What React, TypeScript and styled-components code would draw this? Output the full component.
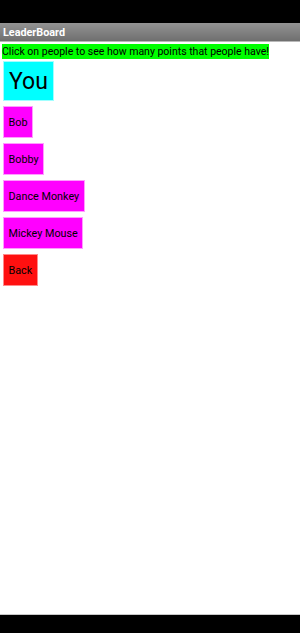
import React from "react";
import styled, { createGlobalStyle } from "styled-components";

const Global = createGlobalStyle`
  html, body { margin: 0; padding: 0; background: #ffffff; }
  body { font-family: Roboto, "Noto Sans", sans-serif; }
`;

const Screen = styled.div`
  width: 300px;
  height: 633px;
  display: flex;
  flex-direction: column;
  background: #ffffff;
`;

const StatusBar = styled.div`
  height: 23px;
  background: #000000;
`;

const TitleBar = styled.div`
  height: 18px;
  background: linear-gradient(#939393, #6f6f6f);
  border-bottom: 1px solid #b8b8b8;
  display: flex;
  align-items: center;
  padding-left: 3px;
  color: #ffffff;
  font-weight: bold;
  font-size: 10.8px;
`;

const Content = styled.div`
  flex: 1;
  display: flex;
  flex-direction: column;
  align-items: flex-start;
  padding: 2px 0 0 2px;
`;

const Label = styled.div`
  background: #00ff00;
  color: #000000;
  font-size: 10.5px;
  line-height: 15px;
  height: 15px;
  white-space: nowrap;
  margin-bottom: 2px;
`;

const Buttons = styled.div`
  display: flex;
  flex-direction: column;
  align-items: flex-start;
  gap: 5px;
  padding-left: 1px;
`;

const Btn = styled.button<{ $bg: string; $edge: string; $big?: boolean }>`
  font-family: Roboto, "Noto Sans", sans-serif;
  background: ${(p) => p.$bg};
  border: 1px solid ${(p) => p.$edge};
  color: #000000;
  height: ${(p) => (p.$big ? "40px" : "32px")};
  padding: 0 ${(p) => (p.$big ? "5px" : "4.5px")};
  font-size: ${(p) => (p.$big ? "23px" : "10.8px")};
  margin: 0;
  cursor: pointer;
`;

const Spacer = styled.div`
  flex: 1;
`;

const NavBar = styled.div`
  height: 18px;
  background: #000000;
  border-top: 1px solid #c8c8c8;
`;

export default function App() {
  const people = ["Bob", "Bobby", "Dance Monkey", "Mickey Mouse"];
  return (
    <>
      <Global />
      <Screen>
        <StatusBar />
        <TitleBar>LeaderBoard</TitleBar>
        <Content>
          <Label>Click on people to see how many points that people have!</Label>
          <Buttons>
            <Btn $bg="#00ffff" $edge="#a0ffff" $big>You</Btn>
            {people.map((p) => (
              <Btn key={p} $bg="#ff00ff" $edge="#ff9cff">{p}</Btn>
            ))}
            <Btn $bg="#ff1010" $edge="#ff8a8a">Back</Btn>
          </Buttons>
          <Spacer />
        </Content>
        <NavBar />
      </Screen>
    </>
  );
}
